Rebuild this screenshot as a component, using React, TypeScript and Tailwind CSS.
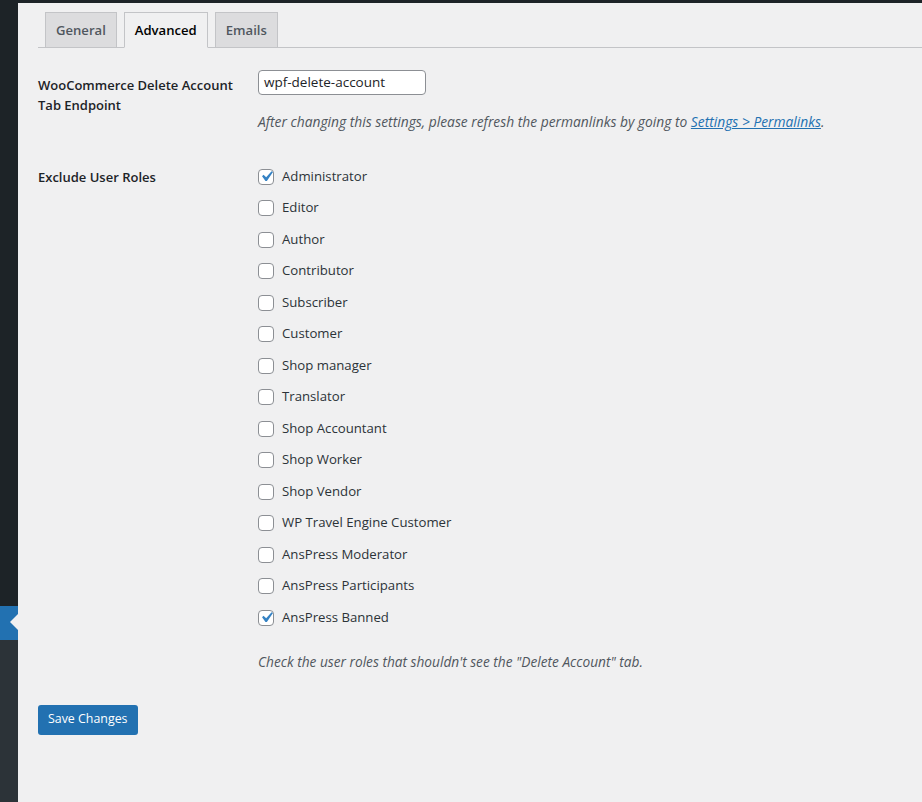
const roles: { name: string; checked: boolean }[] = [
  { name: "Administrator", checked: true },
  { name: "Editor", checked: false },
  { name: "Author", checked: false },
  { name: "Contributor", checked: false },
  { name: "Subscriber", checked: false },
  { name: "Customer", checked: false },
  { name: "Shop manager", checked: false },
  { name: "Translator", checked: false },
  { name: "Shop Accountant", checked: false },
  { name: "Shop Worker", checked: false },
  { name: "Shop Vendor", checked: false },
  { name: "WP Travel Engine Customer", checked: false },
  { name: "AnsPress Moderator", checked: false },
  { name: "AnsPress Participants", checked: false },
  { name: "AnsPress Banned", checked: true },
];

function Checkbox({ checked }: { checked: boolean }) {
  return (
    <span className="flex h-4 w-4 shrink-0 items-center justify-center rounded-[4px] border border-[#8c8f94] bg-white">
      {checked && (
        <svg viewBox="0 0 20 20" className="-m-[3px] h-[21px] w-[21px] shrink-0" fill="#3582c4">
          <path d="M14.83 4.89l1.34.94-5.81 8.38H9.02L5.78 9.67l1.34-1.25 2.57 2.4z" />
        </svg>
      )}
    </span>
  );
}

export default function App() {
  return (
    <div className="flex min-h-[802px] bg-[#f0f0f1] text-[#1d2327] [font-family:'Open_Sans',sans-serif]">
      {/* admin menu strip */}
      <div className="flex w-[18px] shrink-0 flex-col">
        <div className="h-[606px] bg-[#1d2327]" />
        <div className="relative h-[34px] bg-[#2271b1]">
          <div className="absolute right-0 top-[8px] h-0 w-0 border-y-[8px] border-r-[8px] border-y-transparent border-r-[#f0f0f1]" />
        </div>
        <div className="flex-1 bg-[#2c3338]" />
      </div>

      <div className="flex-1">
        <div className="h-[3px] bg-[#1d2327]" />
        <div className="pl-[20px]">
          {/* tabs */}
          <div className="flex items-end gap-[7px] border-b border-[#c3c4c7] pl-[7px] pt-[9px] text-[13.1px] font-semibold leading-[24px]">
            <div className="-mb-px border border-[#c3c4c7] bg-[#dcdcde] px-[10px] py-[5px] text-[#50575e]">General</div>
            <div className="-mb-px border border-[#c3c4c7] border-b-[#f0f0f1] bg-[#f0f0f1] px-[10px] py-[5px] text-black">Advanced</div>
            <div className="-mb-px border border-[#c3c4c7] bg-[#dcdcde] px-[10px] py-[5px] text-[#50575e]">Emails</div>
          </div>

          <div className="mt-[7px] text-[13.2px]">
            {/* endpoint row */}
            <div className="flex">
              <div className="w-[210px] shrink-0 pb-[20px] pr-[10px] pt-[20px] text-[13px] font-semibold leading-[20px]">
                WooCommerce Delete Account Tab Endpoint
              </div>
              <div className="px-[10px] py-[15px]">
                <div className="flex h-[25px] w-[168px] items-center rounded-[4px] border border-[#8c8f94] bg-white px-[5px] text-[13.5px] text-[#1d2327]">
                  wpf-delete-account
                </div>
                <p className="mt-[17px] text-[13.8px] italic leading-[20px] text-[#50575e]">
                  After changing this settings, please refresh the permanlinks by going to{" "}
                  <a href="#" className="text-[#2271b1] underline">Settings &gt; Permalinks</a>.
                </p>
              </div>
            </div>

            {/* roles row */}
            <div className="flex">
              <div className="w-[210px] shrink-0 pr-[10px] pt-[20px] text-[13px] font-semibold leading-[20px]">
                Exclude User Roles
              </div>
              <div className="px-[10px] pt-[14px]">
                <div className="flex flex-col">
                  {roles.map((r) => (
                    <label key={r.name} className="flex h-[31.5px] items-center gap-[8px] text-[#2c3338]">
                      <Checkbox checked={r.checked} />
                      <span>{r.name}</span>
                    </label>
                  ))}
                </div>
                <p className="mt-[18px] text-[13.7px] italic leading-[20px] text-[#50575e]">
                  Check the user roles that shouldn't see the "Delete Account" tab.
                </p>
              </div>
            </div>
          </div>

          <div className="pt-[33px]">
            <button className="h-[30px] rounded-[3px] bg-[#2271b1] px-[10px] text-[12.4px] text-white">
              Save Changes
            </button>
          </div>
        </div>
      </div>
    </div>
  );
}
